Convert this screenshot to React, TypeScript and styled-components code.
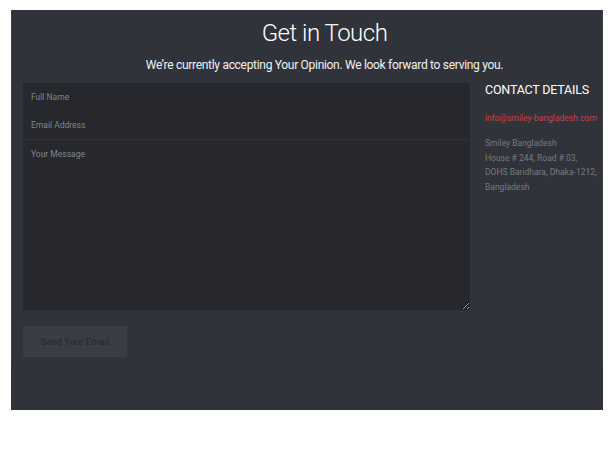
import React from "react";
import styled, { createGlobalStyle } from "styled-components";

const Global = createGlobalStyle`
  html, body { margin: 0; padding: 0; background: #ffffff; }
  * { box-sizing: border-box; }
`;

const Panel = styled.div`
  margin: 10px 0 0 11px;
  width: 592px;
  height: 400px;
  background: #30333a;
  font-family: Roboto, "Liberation Sans", sans-serif;
`;

const Section = styled.section`
  height: 355px;
  border-left: 1px solid #3a3d44;
  border-right: 1px solid #3a3d44;
  padding: 0 0 0 11px;
`;

const Header = styled.header`
  padding-left: 24px;
  text-align: center;
  color: #ffffff;
`;

const Title = styled.h1`
  margin: 0;
  padding-top: 8px;
  font-size: 24px;
  font-weight: 300;
  line-height: 30px;
  letter-spacing: -0.5px;
`;

const Subtitle = styled.p`
  margin: 9px 0 0;
  font-size: 12px;
  font-weight: 400;
  line-height: 16px;
  letter-spacing: -0.3px;
  color: #f2f2f2;
`;

const Body = styled.div`
  display: flex;
  gap: 15px;
  margin-top: 10px;
`;

const Form = styled.form`
  width: 447px;
  display: flex;
  flex-direction: column;
`;

const Field = styled.input<{ $line?: boolean }>`
  display: block;
  width: 100%;
  height: ${(p) => (p.$line ? "29px" : "28px")};
  border: none;
  border-bottom: ${(p) => (p.$line ? "1px solid #2f3237" : "none")};
  background: #26282d;
  padding: 0 8px;
  color: #ccc;
  font-family: inherit;
  font-size: 8.5px;
  outline: none;
  &::placeholder { color: #83868b; }
`;

const Message = styled.textarea`
  display: block;
  width: 100%;
  height: 170px;
  border: none;
  background: #26282d;
  padding: 9px 8px;
  color: #ccc;
  font-family: inherit;
  font-size: 8.5px;
  outline: none;
  resize: vertical;
  &::placeholder { color: #83868b; }
`;

const Button = styled.button`
  margin-top: 16px;
  width: 104px;
  height: 31px;
  border: none;
  background: #3a3d45;
  color: #25272b;
  font-family: inherit;
  font-size: 9.5px;
  cursor: pointer;
`;

const Details = styled.aside`
  color: #ffffff;
`;

const DetailsTitle = styled.h3`
  margin: 0;
  font-size: 12.5px;
  font-weight: 400;
  line-height: 14px;
  letter-spacing: -0.2px;
`;

const Mail = styled.a`
  display: block;
  margin-top: 15px;
  color: #c2434e;
  font-size: 8.5px;
  line-height: 12px;
  text-decoration: none;
`;

const Address = styled.address`
  margin-top: 12px;
  font-style: normal;
  color: #777a80;
  font-size: 8.5px;
  line-height: 14.5px;
`;

export default function App() {
  return (
    <>
      <Global />
      <Panel>
        <Section>
          <Header>
            <Title>Get in Touch</Title>
            <Subtitle>We’re currently accepting Your Opinion. We look forward to serving you.</Subtitle>
          </Header>
          <Body>
            <Form onSubmit={(e) => e.preventDefault()}>
              <Field placeholder="Full Name" />
              <Field $line placeholder="Email Address" />
              <Message placeholder="Your Message" />
              <Button type="submit">Send Your Email</Button>
            </Form>
            <Details>
              <DetailsTitle>CONTACT DETAILS</DetailsTitle>
              <Mail href="#">info@smiley-bangladesh.com</Mail>
              <Address>
                Smiley Bangladesh
                <br />
                House # 244, Road # 03,
                <br />
                DOHS Baridhara, Dhaka-1212,
                <br />
                Bangladesh
              </Address>
            </Details>
          </Body>
        </Section>
      </Panel>
    </>
  );
}
